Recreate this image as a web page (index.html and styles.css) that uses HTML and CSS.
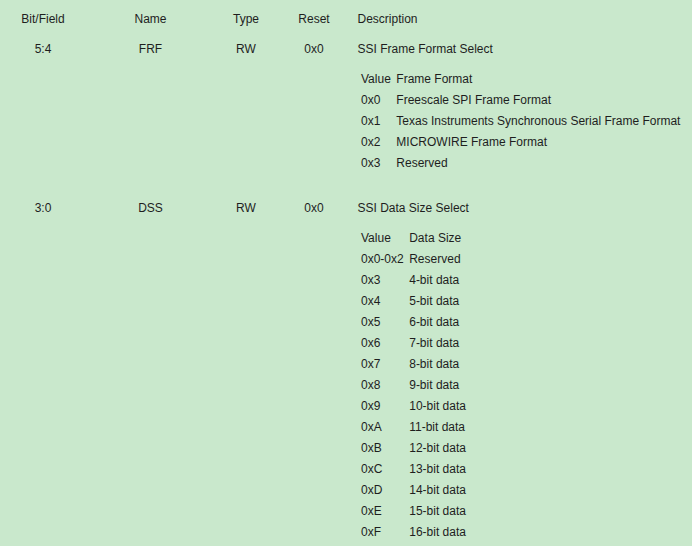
FILE: index.html
```html
<!DOCTYPE html>
<html lang="en">
<head>
<meta charset="utf-8">
<title>SSI Control Register Fields</title>
<link rel="stylesheet" href="styles.css">
</head>
<body>
<div class="reg">
  <div class="cell c-bit head">Bit/Field</div>
  <div class="cell c-name head">Name</div>
  <div class="cell c-type head">Type</div>
  <div class="cell c-reset head">Reset</div>
  <div class="cell c-desc head">Description</div>

  <div class="cell c-bit">5:4</div>
  <div class="cell c-name">FRF</div>
  <div class="cell c-type">RW</div>
  <div class="cell c-reset">0x0</div>
  <div class="cell c-desc">
    <div class="desc-title">SSI Frame Format Select</div>
    <div class="values">
      <div>Value</div><div>Frame Format</div>
      <div>0x0</div><div>Freescale SPI Frame Format</div>
      <div>0x1</div><div>Texas Instruments Synchronous Serial Frame Format</div>
      <div>0x2</div><div>MICROWIRE Frame Format</div>
      <div>0x3</div><div>Reserved</div>
    </div>
  </div>

  <div class="cell c-bit">3:0</div>
  <div class="cell c-name">DSS</div>
  <div class="cell c-type">RW</div>
  <div class="cell c-reset">0x0</div>
  <div class="cell c-desc">
    <div class="desc-title">SSI Data Size Select</div>
    <div class="values">
      <div>Value</div><div>Data Size</div>
      <div>0x0-0x2</div><div>Reserved</div>
      <div>0x3</div><div>4-bit data</div>
      <div>0x4</div><div>5-bit data</div>
      <div>0x5</div><div>6-bit data</div>
      <div>0x6</div><div>7-bit data</div>
      <div>0x7</div><div>8-bit data</div>
      <div>0x8</div><div>9-bit data</div>
      <div>0x9</div><div>10-bit data</div>
      <div>0xA</div><div>11-bit data</div>
      <div>0xB</div><div>12-bit data</div>
      <div>0xC</div><div>13-bit data</div>
      <div>0xD</div><div>14-bit data</div>
      <div>0xE</div><div>15-bit data</div>
      <div>0xF</div><div>16-bit data</div>
    </div>
  </div>
</div>
</body>
</html>
```

FILE: styles.css
```css
html, body {
  margin: 0;
  padding: 0;
  background: #c9e8cc;
}

body {
  font-family: "Liberation Sans", Arial, sans-serif;
  font-size: 12px;
  line-height: 21px;
  color: #1e1e1e;
  overflow: hidden;
}

.reg {
  display: grid;
  grid-template-columns: 86px 129px 62px 74px 1fr;
  row-gap: 9px;
  padding-top: 8.6px;
  align-items: start;
}

.cell {
  text-align: center;
  white-space: nowrap;
}

.c-desc {
  text-align: left;
  padding-left: 6.5px;
}

.values {
  display: grid;
  grid-template-columns: auto auto;
  justify-content: start;
  column-gap: 5.5px;
  margin: 9px 0 15.4px 3.5px;
}
```
